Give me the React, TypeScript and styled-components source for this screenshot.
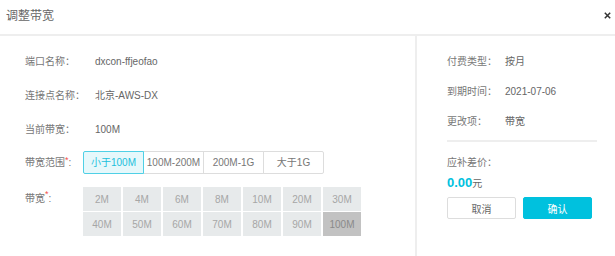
import React from 'react';
import styled, { createGlobalStyle } from 'styled-components';

const GlobalStyle = createGlobalStyle`
  html, body {
    margin: 0;
    padding: 0;
    background: #fff;
  }
  body {
    font-family: 'Liberation Sans', 'Noto Sans CJK SC', sans-serif;
    color: #777;
  }
  * {
    box-sizing: border-box;
  }
`;

const Dialog = styled.div`
  width: 615px;
  height: 256px;
  background: #fff;
  display: flex;
  flex-direction: column;
  overflow: hidden;
`;

const Header = styled.div`
  height: 36px;
  padding: 0 4px 0 6px;
  display: flex;
  align-items: flex-start;
  justify-content: space-between;
  border-bottom: 2px solid #eeeeee;

  .title {
    margin-top: 9px;
    font-size: 12px;
    line-height: 14px;
    color: #666;
  }
  .close {
    margin-top: 12px;
    cursor: pointer;
  }
`;

const Body = styled.div`
  flex: 1;
  display: flex;
`;

const LeftPanel = styled.div`
  width: 417px;
  border-right: 2px solid #eeeeee;
  padding: 16px 0 0 25px;
  display: flex;
  flex-direction: column;
`;

const Row = styled.div<{ $mt?: number }>`
  display: flex;
  align-items: center;
  margin-top: ${(p) => p.$mt ?? 0}px;
  font-size: 10px;
  line-height: 20px;
`;

const Label = styled.div<{ $w: number }>`
  width: ${(p) => p.$w}px;
  flex-shrink: 0;
  color: #777;
  white-space: nowrap;

  .req {
    color: #f5504e;
    font-size: 9px;
    vertical-align: top;
    line-height: 14px;
  }
`;

const Value = styled.div`
  color: #666;
`;

const RangeGroup = styled.div`
  display: flex;
`;

const RangeButton = styled.div<{ $active?: boolean }>`
  position: relative;
  width: 61px;
  height: 23px;
  margin-left: -1px;
  display: flex;
  align-items: center;
  justify-content: center;
  font-size: 10px;
  border: 1px solid ${(p) => (p.$active ? '#4fd0e6' : '#dddddd')};
  background: ${(p) => (p.$active ? '#e6f8fb' : '#fff')};
  color: ${(p) => (p.$active ? '#1cc0dc' : '#777')};
  z-index: ${(p) => (p.$active ? 1 : 0)};
  cursor: pointer;

  &:first-child {
    margin-left: 0;
    border-radius: 2px 0 0 2px;
  }
  &:last-child {
    border-radius: 0 2px 2px 0;
  }
`;

const BandRow = styled.div`
  display: flex;
  align-items: flex-start;
  margin-top: 13px;
  font-size: 10px;

  & > ${Label} {
    line-height: 24px;
  }
`;

const BandGrid = styled.div`
  display: grid;
  grid-template-columns: repeat(7, 38px);
  grid-auto-rows: 24px;
  column-gap: 2px;
  row-gap: 1px;
`;

const BandCell = styled.div<{ $active?: boolean }>`
  display: flex;
  align-items: center;
  justify-content: center;
  font-size: 10px;
  background: ${(p) => (p.$active ? '#c2c2c2' : '#e7eaeb')};
  color: ${(p) => (p.$active ? '#8a8a8a' : '#a6a6a6')};
  cursor: pointer;
`;

const RightPanel = styled.div`
  flex: 1;
  padding: 16px 18px 0 30px;
  display: flex;
  flex-direction: column;
`;

const Divider = styled.div`
  height: 2px;
  background: #eeeeee;
  margin-top: 8px;
`;

const Price = styled.div`
  margin-top: 2px;
  line-height: 16px;
  color: #666;
  font-size: 10px;

  b {
    color: #00c1de;
    font-size: 13px;
    font-weight: bold;
  }
`;

const Actions = styled.div`
  display: flex;
  gap: 7px;
  margin-top: 5px;
`;

const Button = styled.button<{ $primary?: boolean }>`
  width: 69px;
  height: 22px;
  padding: 0;
  font-family: 'Liberation Sans', 'Noto Sans CJK SC', sans-serif;
  font-size: 10px;
  border-radius: 2px;
  border: 1px solid ${(p) => (p.$primary ? '#00c1de' : '#dddddd')};
  background: ${(p) => (p.$primary ? '#00c1de' : '#fff')};
  color: ${(p) => (p.$primary ? '#fff' : '#666')};
  cursor: pointer;
`;

const ranges = ['小于100M', '100M-200M', '200M-1G', '大于1G'];
const bands = [
  '2M', '4M', '6M', '8M', '10M', '20M', '30M',
  '40M', '50M', '60M', '70M', '80M', '90M', '100M',
];

const App = () => {
  return (
    <>
      <GlobalStyle />
      <Dialog>
        <Header>
          <div className='title'>调整带宽</div>
          <svg className='close' width={7} height={7} viewBox='0 0 7 7'>
            <path d='M0.8 0.8 L6.2 6.2 M6.2 0.8 L0.8 6.2' stroke='#333' strokeWidth={1.5} />
          </svg>
        </Header>
        <Body>
          <LeftPanel>
            <Row>
              <Label $w={70}>端口名称：</Label>
              <Value>dxcon-ffjeofao</Value>
            </Row>
            <Row $mt={14}>
              <Label $w={70}>连接点名称：</Label>
              <Value>北京-AWS-DX</Value>
            </Row>
            <Row $mt={14}>
              <Label $w={70}>当前带宽：</Label>
              <Value>100M</Value>
            </Row>
            <Row $mt={11}>
              <Label $w={58}>
                带宽范围<span className='req'>*</span>:
              </Label>
              <RangeGroup>
                {ranges.map((r, i) => (
                  <RangeButton key={r} $active={i === 0}>
                    {r}
                  </RangeButton>
                ))}
              </RangeGroup>
            </Row>
            <BandRow>
              <Label $w={58}>
                带宽<span className='req'>*</span>:
              </Label>
              <BandGrid>
                {bands.map((b) => (
                  <BandCell key={b} $active={b === '100M'}>
                    {b}
                  </BandCell>
                ))}
              </BandGrid>
            </BandRow>
          </LeftPanel>
          <RightPanel>
            <Row>
              <Label $w={58}>付费类型：</Label>
              <Value>按月</Value>
            </Row>
            <Row $mt={10}>
              <Label $w={58}>到期时间：</Label>
              <Value>2021-07-06</Value>
            </Row>
            <Row $mt={10}>
              <Label $w={58}>更改项：</Label>
              <Value>带宽</Value>
            </Row>
            <Divider />
            <Row $mt={11}>
              <Label $w={70}>应补差价：</Label>
            </Row>
            <Price>
              <b>0.00</b>元
            </Price>
            <Actions>
              <Button>取消</Button>
              <Button $primary>确认</Button>
            </Actions>
          </RightPanel>
        </Body>
      </Dialog>
    </>
  );
};

export default App;
